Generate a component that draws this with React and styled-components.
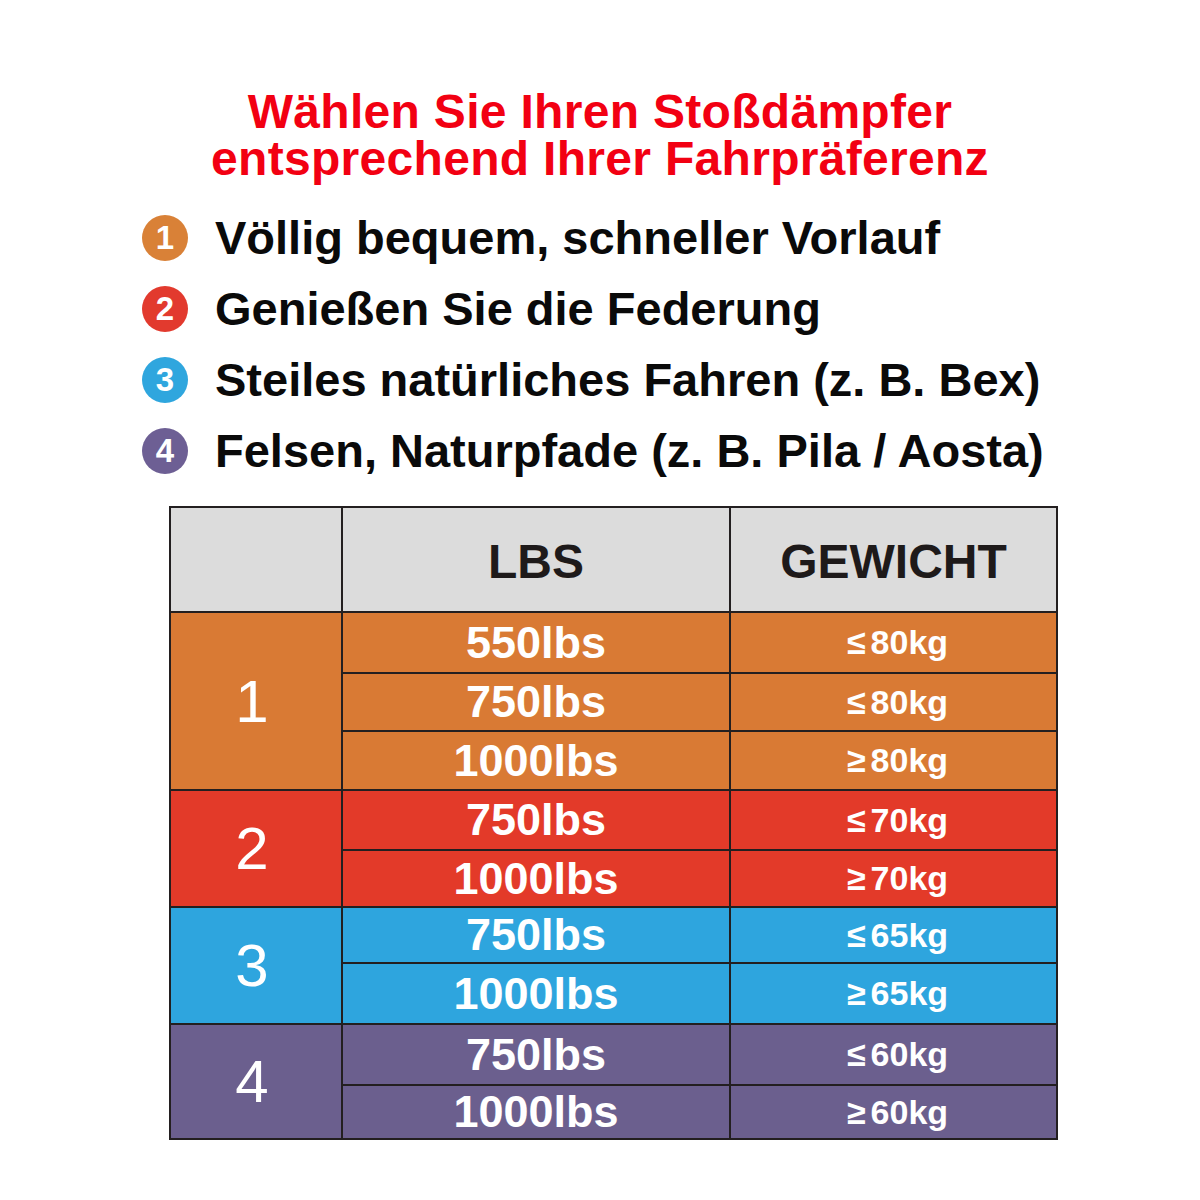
import styled, { createGlobalStyle } from "styled-components";

const GlobalStyle = createGlobalStyle`
  body {
    margin: 0;
    background: #ffffff;
    font-family: "Liberation Sans", Arial, sans-serif;
  }
`;

const items = [
  { no: 1, text: "Völlig bequem, schneller Vorlauf", color: "#d98137" },
  { no: 2, text: "Genießen Sie die Federung", color: "#e23a2e" },
  { no: 3, text: "Steiles natürliches Fahren (z. B. Bex)", color: "#2fa6de" },
  { no: 4, text: "Felsen, Naturpfade (z. B. Pila / Aosta)", color: "#6d5f94" },
];

const groups = [
  {
    no: 1,
    color: "#d97a34",
    rows: [
      { lbs: "550lbs", sign: "≤", kg: "80kg", h: 59 },
      { lbs: "750lbs", sign: "≤", kg: "80kg", h: 56 },
      { lbs: "1000lbs", sign: "≥", kg: "80kg", h: 57 },
    ],
  },
  {
    no: 2,
    color: "#e33a29",
    rows: [
      { lbs: "750lbs", sign: "≤", kg: "70kg", h: 58 },
      { lbs: "1000lbs", sign: "≥", kg: "70kg", h: 55 },
    ],
  },
  {
    no: 3,
    color: "#2ea5de",
    rows: [
      { lbs: "750lbs", sign: "≤", kg: "65kg", h: 54 },
      { lbs: "1000lbs", sign: "≥", kg: "65kg", h: 59 },
    ],
  },
  {
    no: 4,
    color: "#6b5f8e",
    rows: [
      { lbs: "750lbs", sign: "≤", kg: "60kg", h: 59 },
      { lbs: "1000lbs", sign: "≥", kg: "60kg", h: 52 },
    ],
  },
];

const App = () => {
  let line = 2;

  return (
    <Page>
      <GlobalStyle />
      <Title>
        <TitleLine>Wählen Sie Ihren Stoßdämpfer</TitleLine>
        <TitleLine>entsprechend Ihrer Fahrpräferenz</TitleLine>
      </Title>

      <List>
        {items.map((item) => (
          <ListRow key={item.no}>
            <Badge color={item.color}>{item.no}</Badge>
            <ListText>{item.text}</ListText>
          </ListRow>
        ))}
      </List>

      <Table>
        <HeadCell />
        <HeadCell>LBS</HeadCell>
        <HeadCell>GEWICHT</HeadCell>
        {groups.map((group) => {
          const start = line;
          line += group.rows.length;
          return [
            <GroupCell
              key={"g" + group.no}
              color={group.color}
              style={{ gridRow: `${start} / ${line}` }}
            >
              {group.no}
            </GroupCell>,
            ...group.rows.map((row, i) => [
              <LbsCell key={`l${group.no}${i}`} color={group.color} $h={row.h}>
                {row.lbs}
              </LbsCell>,
              <KgCell key={`k${group.no}${i}`} color={group.color} $h={row.h}>
                <Sign>{row.sign}</Sign>
                {row.kg}
              </KgCell>,
            ]),
          ];
        })}
      </Table>
    </Page>
  );
};

export default App;

const Page = styled.div`
  width: 1200px;
  height: 1200px;
  display: flex;
  flex-direction: column;
  align-items: center;
  box-sizing: border-box;
  padding-top: 88px;
`;

const Title = styled.h1`
  margin: 0;
  font-size: 48px;
  font-weight: 700;
  letter-spacing: 0.3px;
  color: #f20012;
  text-align: center;
`;

const TitleLine = styled.div`
  height: 47px;
  line-height: 47px;
  white-space: nowrap;
`;

const List = styled.div`
  align-self: flex-start;
  margin: 20px 0 0 142px;
  display: flex;
  flex-direction: column;
`;

const ListRow = styled.div`
  display: flex;
  align-items: center;
  height: 71px;
  gap: 27px;
`;

const Badge = styled.div`
  width: 46px;
  height: 46px;
  border-radius: 50%;
  background: ${(p) => p.color};
  color: #ffffff;
  display: flex;
  align-items: center;
  justify-content: center;
  font-size: 33px;
  font-weight: 700;
  flex-shrink: 0;
`;

const ListText = styled.div`
  font-size: 47px;
  font-weight: 700;
  color: #0a0a0a;
  white-space: nowrap;
`;

const Table = styled.div`
  align-self: flex-start;
  margin: 20px 0 0 169px;
  display: grid;
  grid-template-columns: 170px 386px 325px;
  gap: 2px;
  padding: 2px;
  background: #231f20;
`;

const Cell = styled.div`
  display: flex;
  align-items: center;
  justify-content: center;
  color: #ffffff;
  font-weight: 700;
  background: ${(p) => p.color};
  box-sizing: border-box;
`;

const HeadCell = styled(Cell)`
  height: 103px;
  background: #dcdcdc;
  color: #1e1a1a;
  font-size: 48px;
  padding-top: 4px;
`;

const GroupCell = styled(Cell)`
  font-weight: 400;
  font-size: 60px;
  padding-right: 8px;
`;

const LbsCell = styled(Cell)`
  height: ${(p) => p.$h}px;
  font-size: 45px;
`;

const KgCell = styled(Cell)`
  height: ${(p) => p.$h}px;
  font-size: 34px;
  padding-left: 8px;
`;

const Sign = styled.span`
  margin-right: 5px;
`;
